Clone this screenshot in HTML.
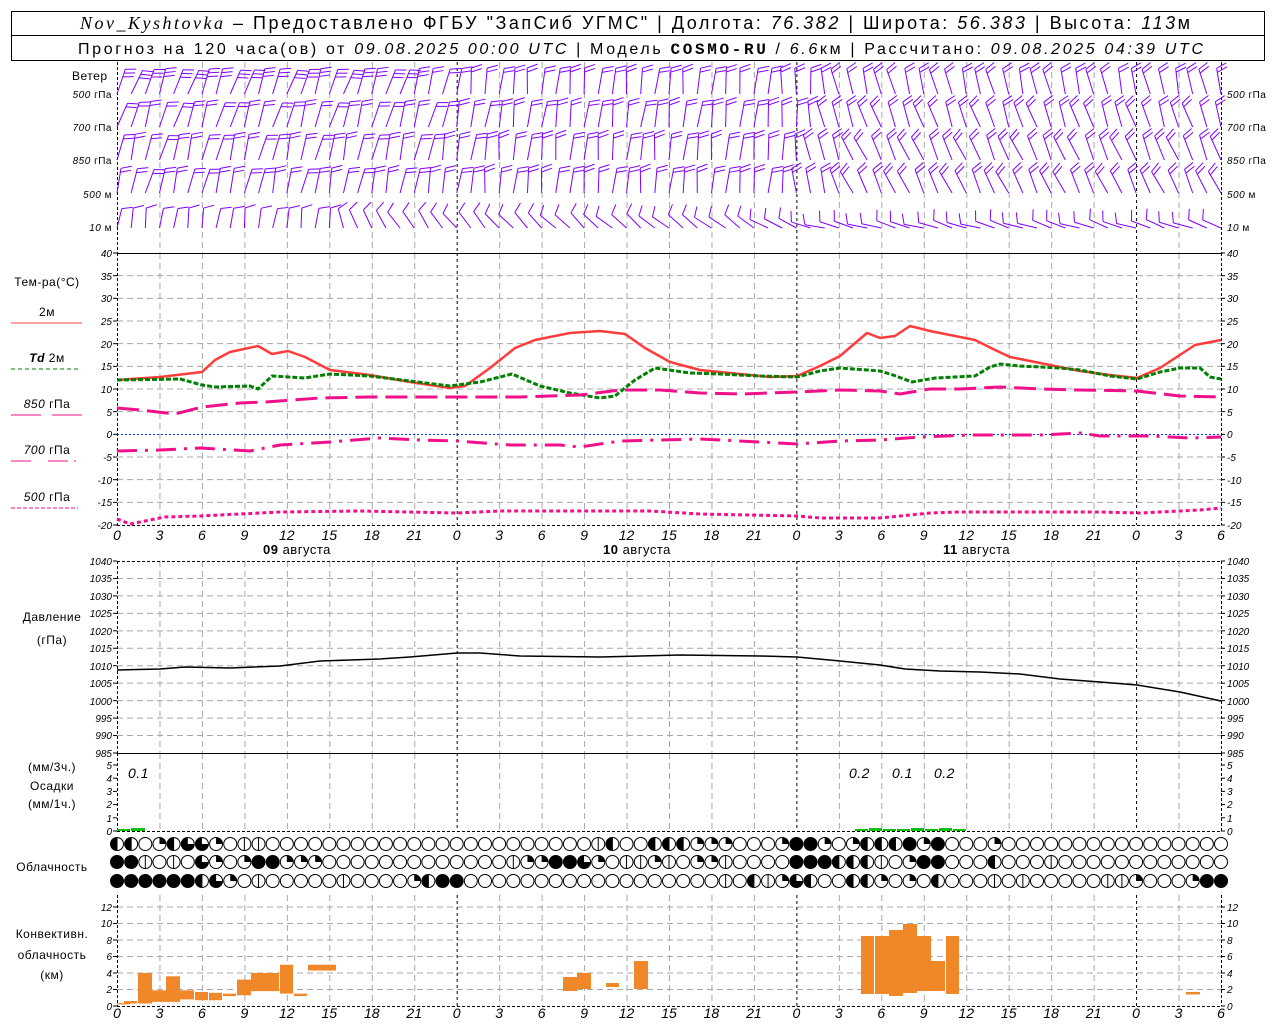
<!DOCTYPE html>
<html><head><meta charset="utf-8"><style>
html,body{margin:0;padding:0;background:#fff;width:1280px;height:1024px;overflow:hidden}
svg{display:block}
text{font-family:"Liberation Sans",sans-serif;fill:#000}
.t{font-size:10px;font-style:italic}
.h{font-size:14px;font-style:italic}
.l{font-size:12px;letter-spacing:0.5px}
</style></head><body>
<svg id="s" width="1280" height="1024" viewBox="0 0 1280 1024" xmlns="http://www.w3.org/2000/svg">
<rect x="11.5" y="11.5" width="1253" height="49" fill="none" stroke="#000"/>
<line x1="11" y1="35.5" x2="1265" y2="35.5" stroke="#000"/>
<text x="80" y="29" font-size="18" textLength="1110" lengthAdjust="spacing"><tspan font-family="Liberation Serif" font-style="italic">Nov_Kyshtovka</tspan> – Предоставлено ФГБУ "ЗапСиб УГМС" | Долгота: <tspan font-style="italic">76.382</tspan> | Широта: <tspan font-style="italic">56.383</tspan> | Высота: <tspan font-style="italic">113</tspan>м</text>
<text x="78" y="54" font-size="16" textLength="1125" lengthAdjust="spacing">Прогноз на 120 часа(ов) от <tspan font-style="italic">09.08.2025 00:00 UTC</tspan>  | Модель <tspan font-weight="bold" font-family="Liberation Mono">COSMO-RU</tspan> / <tspan font-style="italic">6.6</tspan>км | Рассчитано: <tspan font-style="italic">09.08.2025 04:39 UTC</tspan></text>
<g id="g"></g>
<g class="l">
<text x="72" y="80">Ветер</text>
<text x="112" y="98" text-anchor="end" class="t">500 <tspan font-style="normal">гПа</tspan></text>
<text x="112" y="131" text-anchor="end" class="t">700 <tspan font-style="normal">гПа</tspan></text>
<text x="112" y="164" text-anchor="end" class="t">850 <tspan font-style="normal">гПа</tspan></text>
<text x="112" y="198" text-anchor="end" class="t">500 <tspan font-style="normal">м</tspan></text>
<text x="112" y="231" text-anchor="end" class="t">10 <tspan font-style="normal">  м</tspan></text>
<text x="1227" y="98" class="t">500 <tspan font-style="normal">гПа</tspan></text>
<text x="1227" y="131" class="t">700 <tspan font-style="normal">гПа</tspan></text>
<text x="1227" y="164" class="t">850 <tspan font-style="normal">гПа</tspan></text>
<text x="1227" y="198" class="t">500 <tspan font-style="normal">м</tspan></text>
<text x="1227" y="231" class="t">10 <tspan font-style="normal">  м</tspan></text>
<text x="47" y="286" text-anchor="middle">Тем-ра(°C)</text>
<text x="47" y="316" text-anchor="middle">2м</text>
<text x="47" y="362" text-anchor="middle"><tspan font-style="italic" font-weight="bold">Td</tspan>  2м</text>
<text x="47" y="408" text-anchor="middle"><tspan font-style="italic">850</tspan> гПа</text>
<text x="47" y="454" text-anchor="middle"><tspan font-style="italic">700</tspan> гПа</text>
<text x="47" y="501" text-anchor="middle"><tspan font-style="italic">500</tspan> гПа</text>
<text x="52" y="621" text-anchor="middle">Давление</text>
<text x="52" y="644" text-anchor="middle">(гПа)</text>
<text x="52" y="771" text-anchor="middle">(мм/3ч.)</text>
<text x="52" y="790" text-anchor="middle">Осадки</text>
<text x="52" y="808" text-anchor="middle">(мм/1ч.)</text>
<text x="52" y="871" text-anchor="middle">Облачность</text>
<text x="52" y="938" text-anchor="middle">Конвективн.</text>
<text x="52" y="959" text-anchor="middle">облачность</text>
<text x="52" y="979" text-anchor="middle">(км)</text>
<text x="128" y="778" class="h" font-size="13">0.1</text>
<text x="849" y="778" class="h" font-size="13">0.2</text>
<text x="892" y="778" class="h" font-size="13">0.1</text>
<text x="934" y="778" class="h" font-size="13">0.2</text>
<text x="263" y="554" font-size="13"><tspan font-weight="bold">09</tspan> августа</text>
<text x="603" y="554" font-size="13"><tspan font-weight="bold">10</tspan> августа</text>
<text x="943" y="554" font-size="13"><tspan font-weight="bold">11</tspan> августа</text>
</g>
<g class="h" text-anchor="middle">
<text x="117" y="540">0</text><text x="159.5" y="540">3</text><text x="201.9" y="540">6</text><text x="244.4" y="540">9</text><text x="286.8" y="540">12</text><text x="329.3" y="540">15</text><text x="371.8" y="540">18</text><text x="414.2" y="540">21</text><text x="456.7" y="540">0</text><text x="499.1" y="540">3</text><text x="541.6" y="540">6</text><text x="584.1" y="540">9</text><text x="626.5" y="540">12</text><text x="669" y="540">15</text><text x="711.4" y="540">18</text><text x="753.9" y="540">21</text><text x="796.4" y="540">0</text><text x="838.8" y="540">3</text><text x="881.3" y="540">6</text><text x="923.7" y="540">9</text><text x="966.2" y="540">12</text><text x="1008.7" y="540">15</text><text x="1051.1" y="540">18</text><text x="1093.6" y="540">21</text><text x="1136" y="540">0</text><text x="1178.5" y="540">3</text><text x="1221" y="540">6</text>
<text x="117" y="1018">0</text><text x="159.5" y="1018">3</text><text x="201.9" y="1018">6</text><text x="244.4" y="1018">9</text><text x="286.8" y="1018">12</text><text x="329.3" y="1018">15</text><text x="371.8" y="1018">18</text><text x="414.2" y="1018">21</text><text x="456.7" y="1018">0</text><text x="499.1" y="1018">3</text><text x="541.6" y="1018">6</text><text x="584.1" y="1018">9</text><text x="626.5" y="1018">12</text><text x="669" y="1018">15</text><text x="711.4" y="1018">18</text><text x="753.9" y="1018">21</text><text x="796.4" y="1018">0</text><text x="838.8" y="1018">3</text><text x="881.3" y="1018">6</text><text x="923.7" y="1018">9</text><text x="966.2" y="1018">12</text><text x="1008.7" y="1018">15</text><text x="1051.1" y="1018">18</text><text x="1093.6" y="1018">21</text><text x="1136" y="1018">0</text><text x="1178.5" y="1018">3</text><text x="1221" y="1018">6</text>
</g>
<g class="t" text-anchor="end">
<text x="112" y="257">40</text><text x="112" y="280">35</text><text x="112" y="302">30</text><text x="112" y="325">25</text><text x="112" y="348">20</text><text x="112" y="370">15</text><text x="112" y="393">10</text><text x="112" y="416">5</text><text x="112" y="438">0</text><text x="112" y="461">-5</text><text x="112" y="484">-10</text><text x="112" y="506">-15</text><text x="112" y="529">-20</text>
<text x="112" y="565">1040</text><text x="112" y="582">1035</text><text x="112" y="600">1030</text><text x="112" y="617">1025</text><text x="112" y="635">1020</text><text x="112" y="652">1015</text><text x="112" y="670">1010</text><text x="112" y="687">1005</text><text x="112" y="705">1000</text><text x="112" y="722">995</text><text x="112" y="739">990</text><text x="112" y="757">985</text>
<text x="112" y="835">0</text><text x="112" y="822">1</text><text x="112" y="808">2</text><text x="112" y="795">3</text><text x="112" y="782">4</text><text x="112" y="769">5</text>
<text x="112" y="1010">0</text><text x="112" y="993">2</text><text x="112" y="977">4</text><text x="112" y="960">6</text><text x="112" y="944">8</text><text x="112" y="927">10</text><text x="112" y="911">12</text>
</g>
<g class="t">
<text x="1227" y="257">40</text><text x="1227" y="280">35</text><text x="1227" y="302">30</text><text x="1227" y="325">25</text><text x="1227" y="348">20</text><text x="1227" y="370">15</text><text x="1227" y="393">10</text><text x="1227" y="416">5</text><text x="1227" y="438">0</text><text x="1227" y="461">-5</text><text x="1227" y="484">-10</text><text x="1227" y="506">-15</text><text x="1227" y="529">-20</text>
<text x="1227" y="565">1040</text><text x="1227" y="582">1035</text><text x="1227" y="600">1030</text><text x="1227" y="617">1025</text><text x="1227" y="635">1020</text><text x="1227" y="652">1015</text><text x="1227" y="670">1010</text><text x="1227" y="687">1005</text><text x="1227" y="705">1000</text><text x="1227" y="722">995</text><text x="1227" y="739">990</text><text x="1227" y="757">985</text>
<text x="1227" y="835">0</text><text x="1227" y="822">1</text><text x="1227" y="808">2</text><text x="1227" y="795">3</text><text x="1227" y="782">4</text><text x="1227" y="769">5</text>
<text x="1227" y="1010">0</text><text x="1227" y="993">2</text><text x="1227" y="977">4</text><text x="1227" y="960">6</text><text x="1227" y="944">8</text><text x="1227" y="927">10</text><text x="1227" y="911">12</text>
</g>
</svg>
<script>
(function(){
var NS="http://www.w3.org/2000/svg",g=document.getElementById("g");
function el(n,a){var e=document.createElementNS(NS,n);for(var k in a)e.setAttribute(k,a[k]);g.appendChild(e);return e;}
function L(x1,y1,x2,y2,c,w,d){var a={x1:x1,y1:y1,x2:x2,y2:y2,stroke:c||"#000","stroke-width":w||1};if(d)a["stroke-dasharray"]=d;return el("line",a);}
var X0=117,PH=1104/78;
function X(h){return X0+h*PH;}
function hg(y){L(117,y,1221,y,"#a8a8a8",1,"6,4");}
for(var T=-15;T<=35;T+=5)if(T!==0)hg(253+(40-T)*4.5333);
for(var p=990;p<=1035;p+=5)hg(561+(1040-p)*3.4909);
for(var k=2;k<=12;k+=2)hg(1006-k*8.25);
var panels=[[62,253],[253,525],[561,753],[753,831],[895,1006]];
for(var i=1;i<26;i++){var x=X(i*3)+0.5;var day=(i%8===0);
 panels.forEach(function(P){L(x,P[0],x,P[1],day?"#000":"#a8a8a8",1,day?"3,3":"6,4");});}
panels.forEach(function(P){L(117.5,P[0],117.5,P[1],"#000",1,"3,2");L(1221.5,P[0],1221.5,P[1],"#000",1,"3,2");});
function ticks(vals,f){vals.forEach(function(v){var y=f(v);L(113,y,117,y);L(1221,y,1225,y);});}
var tv=[];for(var T=-20;T<=40;T+=5)tv.push(T);ticks(tv,function(T){return 253+(40-T)*4.5333;});
var pv=[];for(var p=985;p<=1040;p+=5)pv.push(p);ticks(pv,function(p){return 561+(1040-p)*3.4909;});
ticks([0,1,2,3,4,5],function(v){return 831-v*13.2;});
ticks([0,2,4,6,8,10,12],function(v){return 1006-v*8.25;});
L(117,253.5,1221,253.5,"#000",1);
L(117,525.5,1221,525.5,"#000",1,"3,2");
L(117,561.5,1221,561.5,"#000",1,"3,2");
L(117,753.5,1221,753.5,"#000",1);
L(117,831.5,1221,831.5,"#000",1,"3,2");
L(117,1006.5,1221,1006.5,"#000",1,"3,2");
L(117,434.5,1221,434.5,"#0030ff",1,"2,2");
L(11,323,82,323,"#ff4040",1);
L(11,369,78,369,"#008000",1,"4,3");
L(11,415,41,415,"#f0108a",1);L(52,415,82,415,"#f0108a",1);
L(11,461,36,461,"#f0108a",1,"20,8,2,8");L(48,461,78,461,"#f0108a",1,"20,6,2,8");
L(11,508,78,508,"#f0108a",1,"4,2");
function PL(pts,c,w,d){var a={points:pts.map(function(p){return p.join(",");}).join(" "),fill:"none",stroke:c,"stroke-width":w,"stroke-linejoin":"round"};if(d)a["stroke-dasharray"]=d;el("polyline",a);}
PL([[117,380],[160,377],[202,372],[215,360],[230,352],[258,346],[272,354],[288,351],[305,357],[330,370],[370,375],[410,382],[450,388],[465,386],[490,368],[515,348],[535,340],[570,333],[600,331],[625,334],[645,348],[670,362],[700,370],[740,374],[770,377],[797,376],[820,366],[840,356],[867,333],[880,338],[895,336],[910,326],[930,331],[950,335],[975,340],[995,350],[1010,357],[1040,363],[1080,371],[1110,375],[1137,378],[1160,368],[1195,345],[1221,340]],"#ff3c3c",2.5);
PL([[117,380],[180,379],[202,385],[215,387],[250,386],[258,389],[272,376],[305,378],[330,374],[370,376],[410,381],[450,386],[480,382],[512,374],[540,386],[570,393],[600,398],[615,396],[635,380],[655,368],[690,373],[720,374],[760,376],[797,377],[820,371],[840,368],[880,371],[893,375],[912,382],[935,378],[955,377],[975,376],[990,367],[1000,364],[1020,366],[1060,368],[1080,370],[1110,376],[1137,379],[1160,372],[1180,368],[1200,368],[1210,377],[1221,379]],"#008000",3,"5,2");
PL([[117,408],[140,410],[175,414],[202,407],[240,403],[265,402],[320,398],[370,397],[457,397],[520,397],[580,395],[620,390],[660,390],[700,393],[740,394],[797,392],[840,390],[880,391],[900,394],[930,389],[960,389],[1000,387],[1040,389],[1080,390],[1137,391],[1180,396],[1221,397]],"#f0108a",3,"22,8");
PL([[117,451],[160,450],[200,448],[250,451],[280,445],[330,442],[380,438],[420,440],[457,441],[510,445],[560,445],[580,447],[620,441],[660,440],[700,439],[760,442],[797,444],[840,441],[880,440],[920,437],[970,435],[1040,435],[1080,433],[1100,436],[1150,436],[1190,438],[1221,437]],"#f0108a",3,"20,8,3,8");
PL([[117,519],[130,524],[150,520],[165,517],[200,516],[280,512],[360,511],[457,513],[500,511],[600,511],[650,511],[700,514],[797,516],[820,518],[880,518],[930,513],[960,512],[1100,512],[1140,513],[1200,510],[1221,508]],"#f0108a",3,"4,3");
PL([[117,670],[160,669],[185,667],[230,668],[280,666],[320,661],[380,659],[410,657],[457,653],[480,653],[520,656],[600,657],[680,655],[760,656],[797,657],[840,661],[880,665],[905,669],[940,671],[980,672],[1020,674],[1060,679],[1100,682],[1137,685],[1180,692],[1221,701]],"#000",1.5);
[[117,130,829],[131,145,828],[855,868,829],[869,882,828],[883,896,829],[897,910,829],[911,924,828],[925,938,829],[939,952,828],[953,966,829]].forEach(function(b){el("rect",{x:b[0],y:b[2],width:b[1]-b[0],height:831-b[2],fill:"#10c010"});});
function kmy(v){return 1006-v*8.25;}
[[117,130,.2,.35],[124,137,.3,.6],[138,152,.3,4],[152,166,.5,1.9],[166,180,.5,3.6],[180,194,.8,1.9],[195,208,.7,1.7],[209,222,.7,1.6],[223,236,1.2,1.5],[237,251,1.3,3.2],[251,279,1.8,4],[280,293,1.5,5],[294,307,1.2,1.5],[308,336,4.3,5],[1186,1200,1.4,1.7]].forEach(function(b){el("rect",{x:b[0],y:kmy(b[3]),width:b[1]-b[0],height:(b[3]-b[2])*8.25,fill:"#f0882a"});});
[[563,577,977,991],[577,591,973,989],[606,619,983,987],[634,648,961,989],[861,874,936,994],[875,889,936,994],[889,903,930,996],[903,917,924,993],[917,931,936,991],[931,945,961,991],[946,959,936,994]].forEach(function(b){el("rect",{x:b[0],y:b[2],width:b[1]-b[0],height:b[3]-b[2],fill:"#f0882a"});});
function row(spec){var a=[];for(var i=0;i<79;i++)a.push("0");for(var k in spec)a[k]=spec[k];return a;}
var R1=row({0:"h",1:"h",3:"q",4:"h",5:"t",6:"t",7:"q",9:"v",10:"v",34:"v",35:"h",38:"h",39:"h",40:"h",41:"q",42:"q",43:"q",47:"q",48:"f",49:"f",50:"q",52:"q",53:"h",54:"h",55:"h",56:"f",57:"q",58:"f",62:"q"});
var R2=row({0:"f",1:"f",2:"v",4:"v",6:"t",7:"q",9:"q",10:"f",11:"f",12:"q",13:"q",14:"q",28:"v",29:"q",30:"q",31:"f",32:"f",33:"t",34:"q",36:"v",37:"v",38:"q",39:"v",41:"q",42:"q",43:"v",48:"f",49:"f",50:"f",51:"h",52:"h",53:"h",54:"v",56:"q",57:"f",58:"f",62:"h",66:"v"});
var R3=row({0:"f",1:"f",2:"f",3:"f",4:"f",5:"f",6:"h",7:"t",8:"q",10:"v",16:"v",21:"q",22:"h",23:"f",24:"f",43:"v",45:"h",46:"v",47:"q",48:"t",49:"h",52:"h",53:"h",54:"q",56:"q",58:"h",62:"v",64:"v",70:"v",71:"v",72:"q",76:"q",77:"f",78:"f"});
function circ(cx,cy,t){var r=6.5;
 if(t==="f"){el("circle",{cx:cx,cy:cy,r:r,fill:"#000",stroke:"#000"});return;}
 el("circle",{cx:cx,cy:cy,r:r,fill:"#fff",stroke:"#000"});
 if(t==="q")el("path",{d:"M"+cx+","+cy+"V"+(cy-r)+"A"+r+","+r+" 0 0 1 "+(cx+r)+","+cy+"Z",fill:"#000"});
 if(t==="h")el("path",{d:"M"+cx+","+(cy-r)+"A"+r+","+r+" 0 0 0 "+cx+","+(cy+r)+"Z",fill:"#000"});
 if(t==="t")el("path",{d:"M"+cx+","+cy+"H"+(cx+r)+"A"+r+","+r+" 0 1 1 "+cx+","+(cy-r)+"Z",fill:"#000"});
 if(t==="v"||t==="h")L(cx,cy-r,cx,cy+r);
}
[R1,R2,R3].forEach(function(R,j){var cy=[844,862,881][j];for(var i=0;i<79;i++)circ(X(i),cy,R[i]);});
function barb(x0,y0,ang,len,nb){var a=ang*Math.PI/180,sx=Math.sin(a),sy=-Math.cos(a);
 var tx=x0+len*sx,ty=y0+len*sy;L(x0,y0,tx,ty,"#8000ff",1);
 var th=70*Math.PI/180,bx=sx*Math.cos(th)-sy*Math.sin(th),by=sx*Math.sin(th)+sy*Math.cos(th);
 for(var j=0;j<nb;j++){var px=tx-sx*j*4,py=ty-sy*j*4;L(px,py,px+bx*11,py+by*11,"#8000ff",1);}}
function interp(pts,h){for(var i=1;i<pts.length;i++)if(h<=pts[i][0]){var a=pts[i-1],b=pts[i],t=(h-a[0])/(b[0]-a[0]);return a[1]+t*(b[1]-a[1]);}return pts[pts.length-1][1];}
var rows=[
 {y:94,len:26,ang:[[0,20],[20,18],[26,5],[46,5],[52,-15],[78,-12]],nb:function(h){return h<22?3:2;}},
 {y:127,len:26,ang:[[0,18],[22,15],[26,8],[46,6],[52,-20],[78,-18]],nb:function(h){return 2;}},
 {y:160,len:26,ang:[[0,15],[22,12],[26,5],[46,5],[52,-25],[78,-22]],nb:function(h){return 2;}},
 {y:193,len:25,ang:[[0,15],[22,10],[26,5],[46,5],[52,-25],[78,-25]],nb:function(h){return 2;}},
 {y:228,len:20,ang:[[0,8],[14,8],[18,-30],[30,-45],[45,-55],[50,-75],[78,-70]],nb:function(h){return 1;}}];
rows.forEach(function(r){for(var h=0;h<79;h++){var an=interp(r.ang,h)+6*Math.sin(h*1.7+r.y);barb(X(h),r.y,an,r.len,r.nb(h));}});
})();
</script>
</body></html>
